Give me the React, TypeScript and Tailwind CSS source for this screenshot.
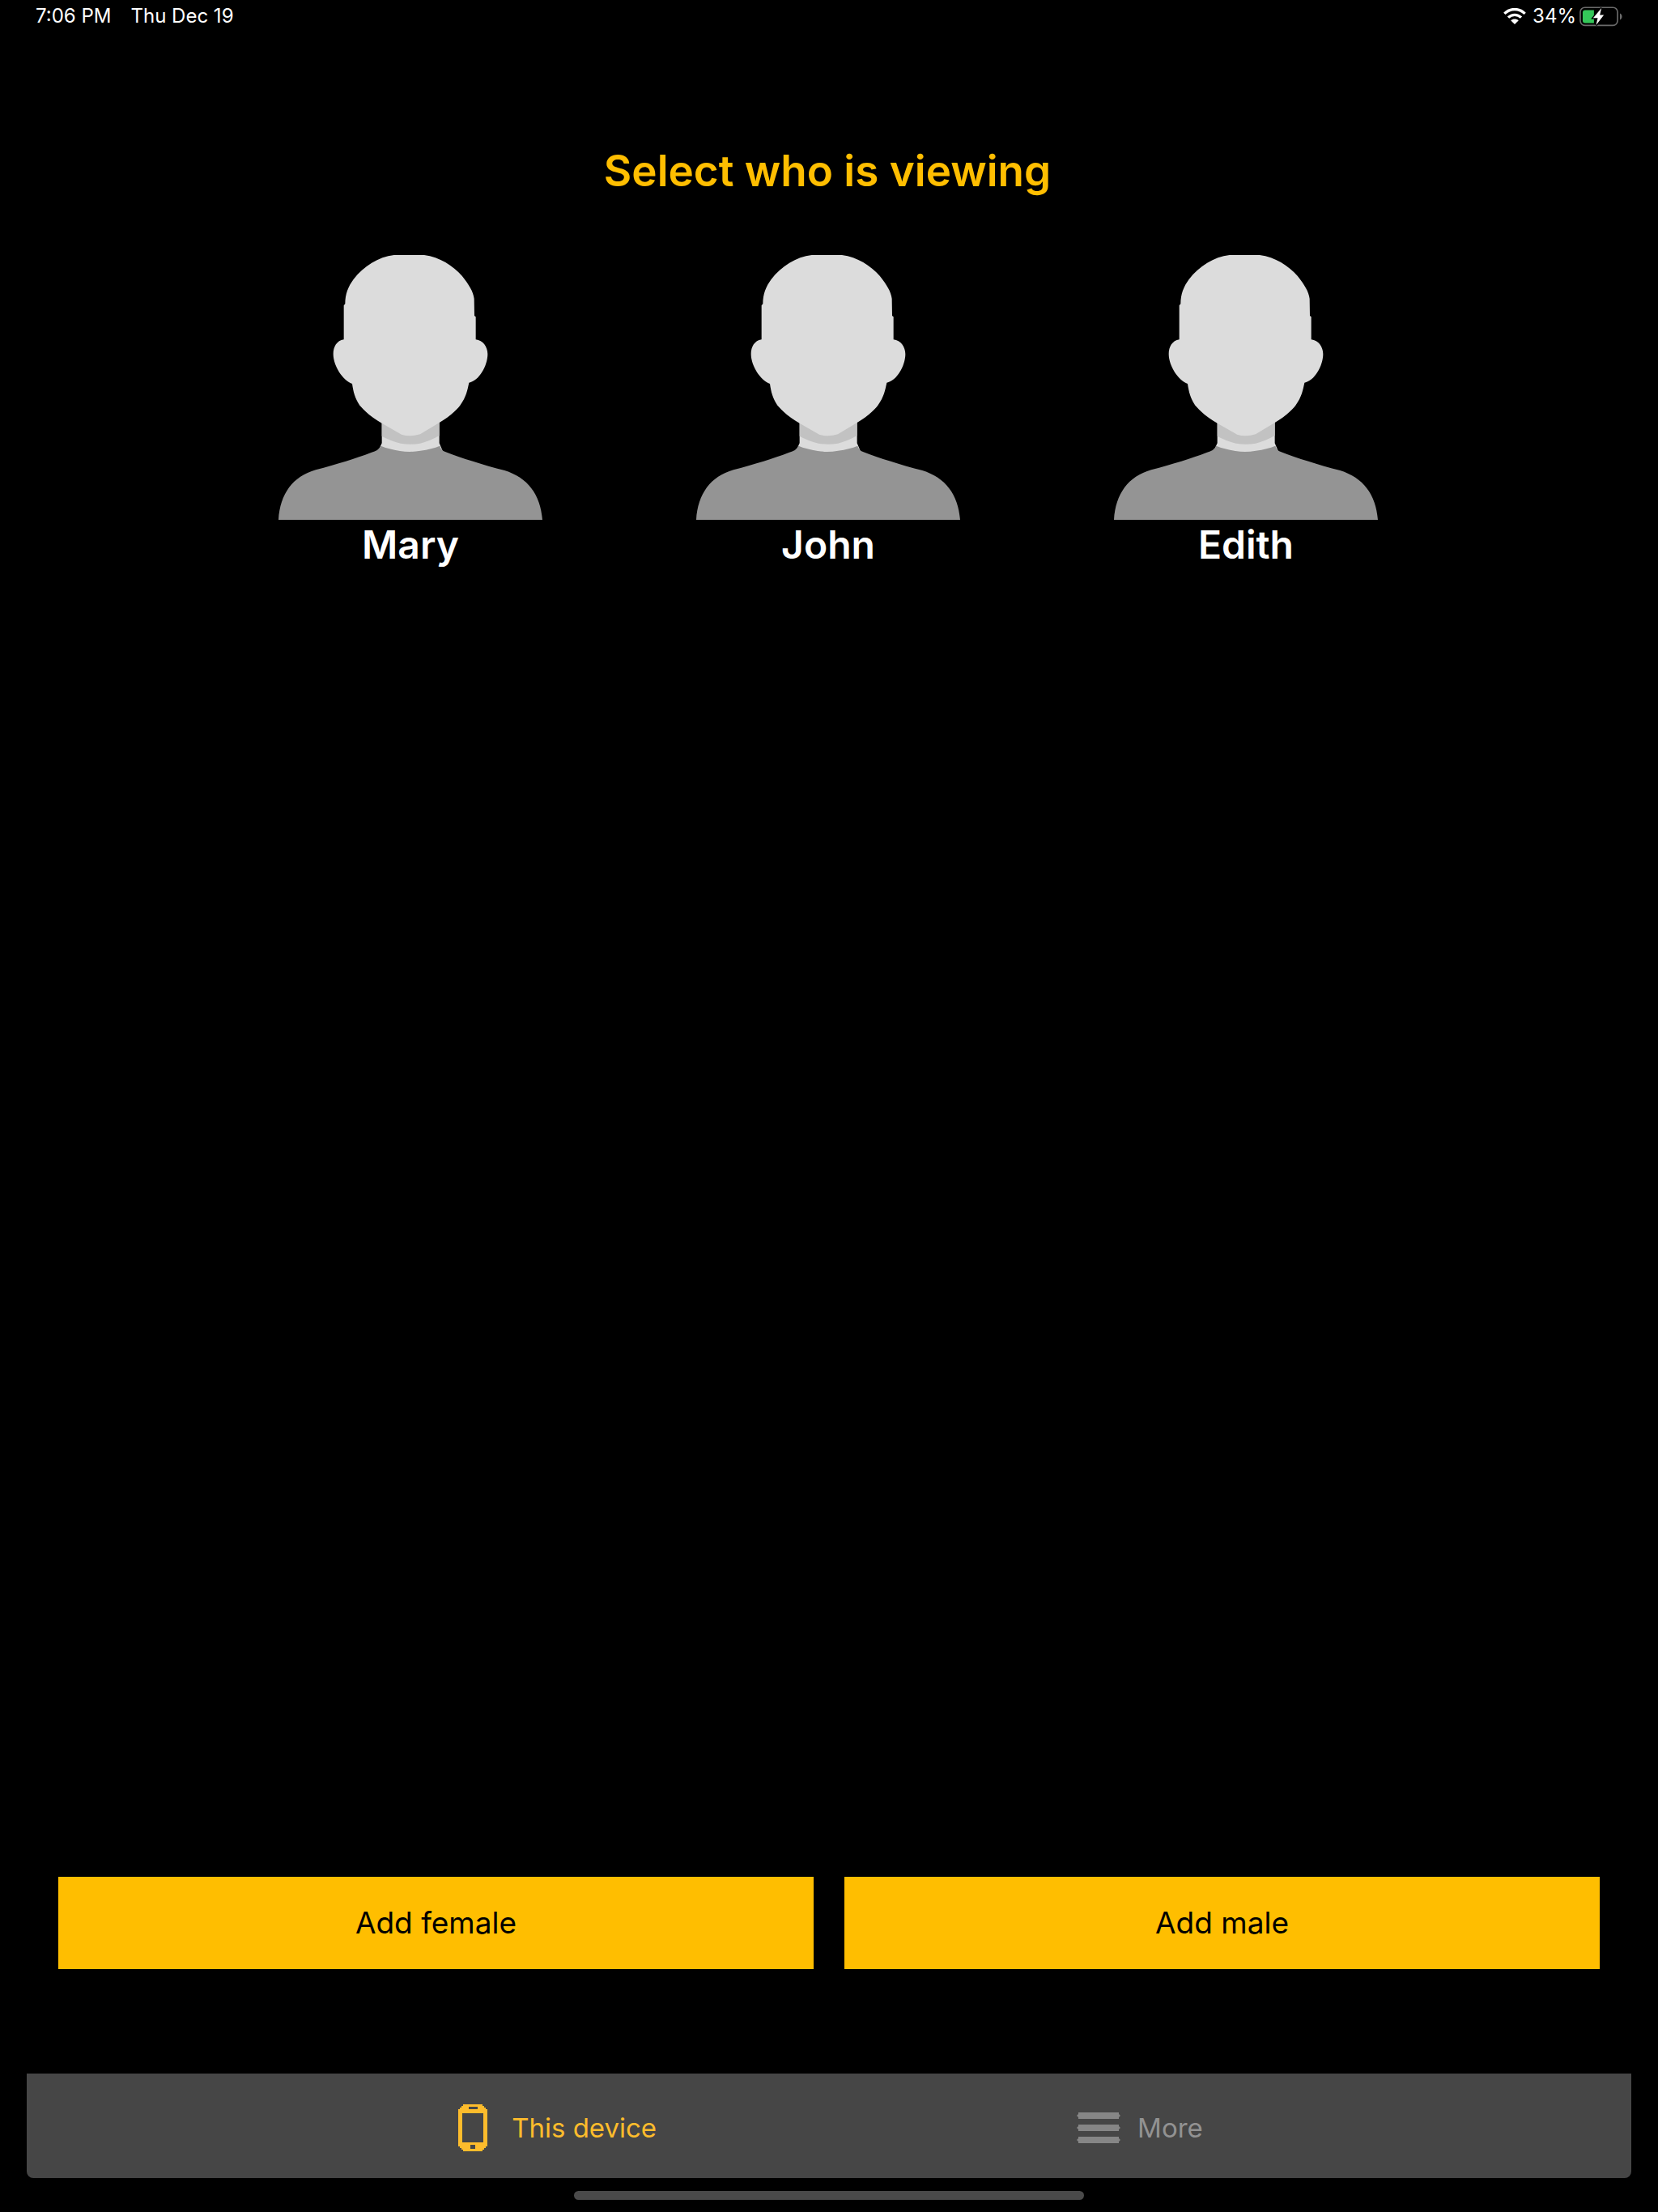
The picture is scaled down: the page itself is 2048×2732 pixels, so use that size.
import React, { useState } from "react";

interface Profile {
  id: string;
  name: string;
}

const PROFILES: Profile[] = [
  { id: "mary", name: "Mary" },
  { id: "john", name: "John" },
  { id: "edith", name: "Edith" }
];

function WifiIcon() {
  return (
    <svg viewBox="0 0 84 60" className="w-[28px] h-[20px]" fill="none" stroke="#fff" aria-hidden="true">
      <path d="M4 20.500C26 -1 58 -1 80 20.500" strokeWidth="10" />
      <path d="M18 35C32 21.500 52 21.500 66 35" strokeWidth="10" />
      <path d="M42 60L27.500 46C35 38.500 49 38.500 56.500 46Z" fill="#fff" stroke="none" />
    </svg>
  );
}

function BatteryIcon() {
  return (
    <svg viewBox="0 0 160 74" className="w-[53px] h-[25px]" aria-hidden="true">
      <rect x="3" y="3" width="139" height="67" rx="17" fill="none" stroke="#6b6b6b" strokeWidth="5" />
      <path d="M151 25C161 29 161 45 151 49Z" fill="#6b6b6b" />
      <path d="M21 13H54V61H21Q12 61 12 52V22Q12 13 21 13Z" fill="#34c759" />
      <path d="M82 5L51 42H68L62 69L91 31H76Z" fill="#fff" stroke="#000" strokeWidth="8" paintOrder="stroke" />
    </svg>
  );
}

function Avatar() {
  return (
    <svg viewBox="42 45 978 981" className="w-[326px] h-[327px]" aria-hidden="true">
      {/* neck */}
      <path d="M425 640H638V742L650 770L530 800L412 770L425 742Z" fill="#dcdcdc" />
      <path d="M425 640H638V714Q605 733 567 743Q530 749 495 743Q455 733 425 716Z" fill="#c2c2c2" />
      {/* shoulders */}
      <path
        d="M421 752Q450 764 492 771Q530 777 568 770Q610 764 640 752Q644 768 660 774C720 797 800 823 880 843C965 870 1012 930 1020 1026H42C48 930 95 865 180 841C260 820 330 798 385 777Q414 769 421 752Z"
        fill="#949494"
      />
      {/* head with ears */}
      <path
        d="M470 45H582C640 53 688 84 722 122C748 155 764 180 767 207L768 270L773 274V358C800 361 817 386 817 412C817 455 785 512 748 518C742 545 738 570 715 602C695 628 665 650 638 666L567 709Q530 720 498 710L425 668C395 652 367 630 343 602C325 575 319 550 315 522C280 510 245 455 245 412C245 385 258 362 284 358V232L289 226C289 190 300 162 320 135C358 86 412 52 470 45Z"
        fill="#dcdcdc"
      />
    </svg>
  );
}

function DeviceIcon() {
  return (
    <svg viewBox="0 0 38 58" className="w-[38px] h-[58px]" aria-hidden="true">
      <path
        fillRule="evenodd"
        fill="#fdbc2c"
        d="M7 0H31V2H33V4H35V6H37V52H35V54H33V56H31V58H7V56H5V54H3V52H1V6H3V4H5V2H7ZM14 3V6H25V3ZM6 11V47H32V11ZM16 50V55H22V50Z"
      />
    </svg>
  );
}

function MoreIcon() {
  return (
    <svg viewBox="0 0 54 40" className="w-[54px] h-[40px]" fill="#868686" aria-hidden="true">
      <path d="M2 1H52V3L54 5L52 7V9H2V7L0 5L2 3Z" />
      <path d="M2 16H52V18L54 20L52 22V24H2V22L0 20L2 18Z" />
      <path d="M2 31H52V33L54 35L52 37V39H2V37L0 35L2 33Z" />
    </svg>
  );
}

export default function App() {
  const [selected, setSelected] = useState<string | null>(null);
  const [tab, setTab] = useState("device");

  return (
    <div className="min-h-screen bg-black text-white flex flex-col font-['Inter',sans-serif]">
      {/* Status bar */}
      <header className="flex items-center justify-between h-[40px] px-[44px] text-[24px] leading-[32px]">
        <div className="flex items-center gap-6">
          <span>7:06 PM</span>
          <span>Thu Dec 19</span>
        </div>
        <div className="flex items-center">
          <WifiIcon />
          <span className="ml-2 mr-1">34%</span>
          <BatteryIcon />
        </div>
      </header>

      {/* Profile picker */}
      <main className="flex-1 flex flex-col">
        <h1 className="mt-[137px] pr-1 text-center text-[53px] leading-[68px] font-semibold text-[#ffbe00]">
          Select who is viewing
        </h1>

        <div className="mt-[70px] pr-[2px] flex justify-center gap-[190px]">
          {PROFILES.map((profile) => (
            <button
              key={profile.id}
              type="button"
              aria-pressed={selected === profile.id}
              onClick={() => setSelected(profile.id)}
              className="flex flex-col items-center cursor-pointer"
            >
              <Avatar />
              <span className="text-[48px] leading-[62px] font-semibold">{profile.name}</span>
            </button>
          ))}
        </div>

        <div className="mt-auto mb-[129px] px-[72px] grid grid-cols-2 gap-[38px]">
          <button type="button" className="h-[114px] bg-[#ffbe00] text-black text-[37px] leading-[48px] cursor-pointer">
            Add female
          </button>
          <button type="button" className="h-[114px] bg-[#ffbe00] text-black text-[37px] leading-[48px] cursor-pointer">
            Add male
          </button>
        </div>
      </main>

      {/* Tab bar */}
      <nav className="mx-[33px] h-[129px] pt-[5px] pr-[8px] rounded-b-[8px] bg-[#464646] flex items-center justify-center gap-[516px] text-[33px] leading-[40px]">
        <button
          type="button"
          aria-current={tab === "device" ? "page" : undefined}
          onClick={() => setTab("device")}
          className="flex items-center gap-[18px] text-[#fdbc2c] cursor-pointer"
        >
          <span className="w-[60px] flex justify-center">
            <DeviceIcon />
          </span>
          This device
        </button>
        <button
          type="button"
          aria-current={tab === "more" ? "page" : undefined}
          onClick={() => setTab("more")}
          className="flex items-center gap-[18px] text-[#929292] cursor-pointer"
        >
          <span className="w-[60px] flex justify-center">
            <MoreIcon />
          </span>
          More
        </button>
      </nav>

      {/* Home indicator */}
      <div className="mt-4 mb-[15px] mx-auto w-[630px] h-[11px] rounded-full bg-[#4a4a4a]" />
    </div>
  );
}
